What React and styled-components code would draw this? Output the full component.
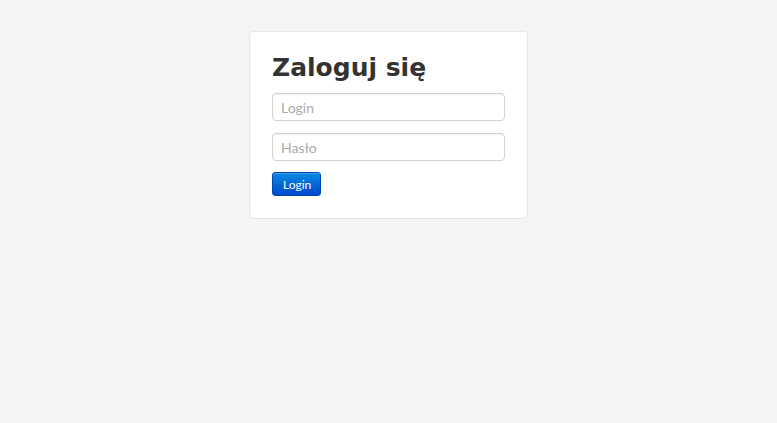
import React from "react";
import styled, { createGlobalStyle } from "styled-components";

const GlobalStyle = createGlobalStyle`
    html, body {
        margin: 0;
        padding: 0;
        background: #f4f4f4;
        height: 100%;
    }
    body {
        font-family: "Lato", "Open Sans", sans-serif;
    }
`;

const Page = styled.div`
    display: flex;
    justify-content: center;
    padding-top: 31px;
`;

const Card = styled.form`
    width: 233px;
    padding: 18px 22px 22px;
    background: #ffffff;
    border: 1px solid #e6e6e6;
    border-radius: 4px;
    display: flex;
    flex-direction: column;
    gap: 12px;
`;

const Title = styled.h1`
    margin: 0 0 -5px;
    font-family: "DejaVu Sans", sans-serif;
    font-weight: bold;
    font-size: 25px;
    line-height: 36px;
    color: #333333;
`;

const Field = styled.input`
    box-sizing: border-box;
    width: 100%;
    height: 28px;
    padding: 4px 8px;
    border: 1px solid #d2d2d2;
    border-radius: 4px;
    box-shadow: inset 0 1px 1px rgba(0, 0, 0, 0.06);
    font-family: "Lato", sans-serif;
    font-size: 14px;
    color: #555555;
    outline: none;
    &::placeholder {
        color: #aaaaaa;
    }
`;

const Button = styled.button`
    align-self: flex-start;
    height: 24px;
    margin-top: -1px;
    padding: 0 9px 0 10px;
    border: 1px solid #0049b0;
    border-radius: 3px;
    background: linear-gradient(to bottom, #0a8ae0, #0048cc);
    color: #ffffff;
    font-family: "Lato", sans-serif;
    font-size: 12px;
    box-shadow: inset 0 1px 0 rgba(255, 255, 255, 0.2);
    cursor: pointer;
`;

export default function App() {
    return (
        <>
            <GlobalStyle />
            <Page>
                <Card onSubmit={(e) => e.preventDefault()}>
                    <Title>Zaloguj się</Title>
                    <Field type="text" placeholder="Login" />
                    <Field type="password" placeholder="Hasło" />
                    <Button type="submit">Login</Button>
                </Card>
            </Page>
        </>
    );
}
